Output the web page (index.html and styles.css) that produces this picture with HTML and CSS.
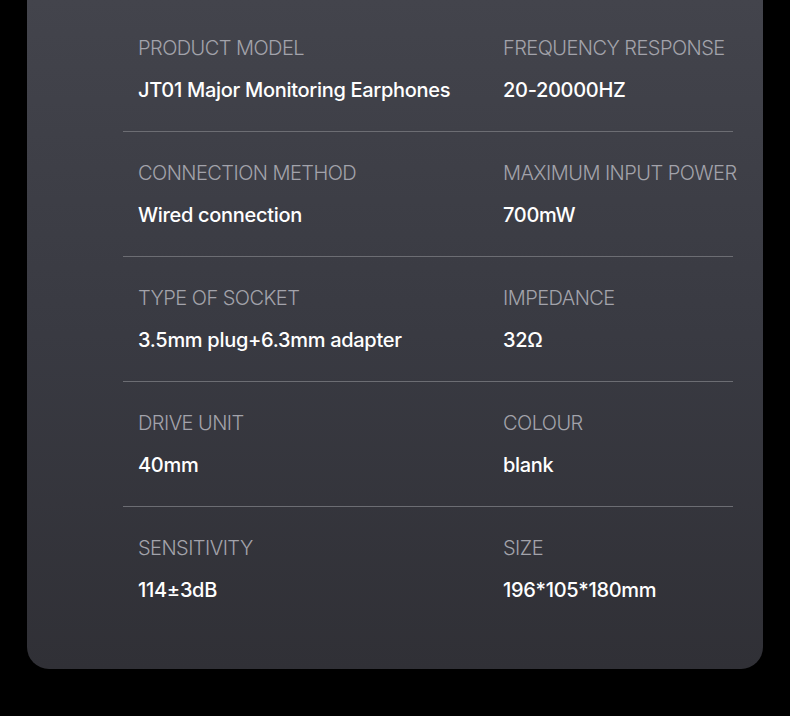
FILE: index.html
```html
<!DOCTYPE html>
<html>
<head>
<meta charset="utf-8">
<link rel="stylesheet" href="styles.css">
</head>
<body>
<div class="card">
  <div class="row">
    <div class="cell"><div class="label">PRODUCT MODEL</div><div class="value">JT01 Major Monitoring Earphones</div></div>
    <div class="cell"><div class="label">FREQUENCY RESPONSE</div><div class="value">20-20000HZ</div></div>
  </div>
  <div class="row">
    <div class="cell"><div class="label">CONNECTION METHOD</div><div class="value">Wired connection</div></div>
    <div class="cell"><div class="label">MAXIMUM INPUT POWER</div><div class="value">700mW</div></div>
  </div>
  <div class="row">
    <div class="cell"><div class="label">TYPE OF SOCKET</div><div class="value">3.5mm plug+6.3mm adapter</div></div>
    <div class="cell"><div class="label">IMPEDANCE</div><div class="value">32Ω</div></div>
  </div>
  <div class="row">
    <div class="cell"><div class="label">DRIVE UNIT</div><div class="value">40mm</div></div>
    <div class="cell"><div class="label">COLOUR</div><div class="value">blank</div></div>
  </div>
  <div class="row last">
    <div class="cell"><div class="label">SENSITIVITY</div><div class="value">114±3dB</div></div>
    <div class="cell"><div class="label">SIZE</div><div class="value">196*105*180mm</div></div>
  </div>
</div>
</body>
</html>
```

FILE: styles.css
```css
html, body {
  margin: 0;
  padding: 0;
  background: #000;
}
body {
  width: 790px;
  height: 716px;
  overflow: hidden;
  font-family: Inter, "Noto Sans", sans-serif;
}
.card {
  margin: 0 27px;
  height: 669px;
  box-sizing: border-box;
  padding: 7px 30px 0 96px;
  border-radius: 0 0 22px 22px;
  background: linear-gradient(180deg, #43444c 0%, #393a42 50%, #303036 100%);
}
.row {
  display: grid;
  grid-template-columns: 365px 1fr;
  padding: 29px 0 29px 15px;
  border-bottom: 1px solid #6c6d73;
}
.row.last {
  border-bottom: none;
}
.label {
  font-size: 20px;
  line-height: 24px;
  font-weight: 300;
  letter-spacing: -0.55px;
  color: #a3a3ab;
  white-space: nowrap;
}
.value {
  margin-top: 18px;
  font-size: 20px;
  line-height: 24px;
  font-weight: 500;
  letter-spacing: -0.3px;
  color: #ffffff;
  white-space: nowrap;
}
```
